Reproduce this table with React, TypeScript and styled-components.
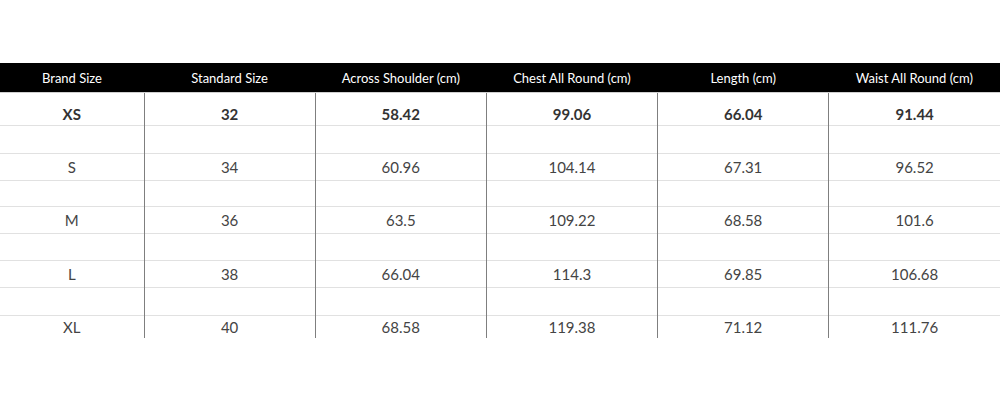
import React from 'react';
import styled, { createGlobalStyle } from 'styled-components';

const GlobalStyle = createGlobalStyle`
  html, body {
    margin: 0;
    padding: 0;
    background: #fff;
  }
  body {
    font-family: Lato, 'Open Sans', Arial, sans-serif;
  }
`;

const Page = styled.div`
  width: 1000px;
  height: 400px;
  padding-top: 63px;
  box-sizing: border-box;
  overflow: hidden;
`;

const Table = styled.table`
  width: 1000px;
  border-collapse: collapse;
  table-layout: fixed;
`;

const HeadCell = styled.th`
  height: 29px;
  padding: 0;
  background: #000;
  color: #fff;
  font-size: 13px;
  font-weight: 400;
  text-align: center;
  vertical-align: middle;
  border-bottom: 1px solid #cfcfcf;
`;

const Row = styled.tr<{ $h: number; $last?: boolean }>`
  height: ${p => p.$h}px;
  border-bottom: ${p => (p.$last ? 'none' : '1px solid #e1e1e1')};
`;

const Cell = styled.td<{ $bold?: boolean }>`
  padding: ${p => (p.$bold ? '10px 0 0' : '0')};
  text-align: center;
  vertical-align: middle;
  font-size: 15px;
  font-weight: ${p => (p.$bold ? 700 : 400)};
  color: ${p => (p.$bold ? '#333' : '#444')};
  & + & {
    border-left: 1px solid #7f7f7f;
  }
`;

const columns = [
  'Brand Size',
  'Standard Size',
  'Across Shoulder (cm)',
  'Chest All Round (cm)',
  'Length (cm)',
  'Waist All Round (cm)',
];

const sizes = [
  ['XS', '32', '58.42', '99.06', '66.04', '91.44'],
  ['S', '34', '60.96', '104.14', '67.31', '96.52'],
  ['M', '36', '63.5', '109.22', '68.58', '101.6'],
  ['L', '38', '66.04', '114.3', '69.85', '106.68'],
  ['XL', '40', '68.58', '119.38', '71.12', '111.76'],
];

// heights of the rows below the header, spacer rows included
const dataHeights = [33, 27, 27, 27, 27, 26, 27, 28, 22];
const spacerHeights = [28, 26, 27, 28];

const Spacer = ({ h }: { h: number }) => (
  <Row $h={h}>
    {columns.map(c => (
      <Cell key={c} />
    ))}
  </Row>
);

export default function App() {
  return (
    <Page>
      <GlobalStyle />
      <Table>
        <colgroup>
          <col style={{ width: 144 }} />
          <col />
          <col />
          <col />
          <col />
          <col />
        </colgroup>
        <thead>
          <tr>
            {columns.map(c => (
              <HeadCell key={c}>{c}</HeadCell>
            ))}
          </tr>
        </thead>
        <tbody>
          {sizes.map((row, i) => {
            const last = i === sizes.length - 1;
            return (
              <React.Fragment key={row[0]}>
                <Row $h={dataHeights[i * 2]} $last={last}>
                  {row.map((v, j) => (
                    <Cell key={j} $bold={i === 0}>
                      {v}
                    </Cell>
                  ))}
                </Row>
                {!last && <Spacer h={spacerHeights[i]} />}
              </React.Fragment>
            );
          })}
        </tbody>
      </Table>
    </Page>
  );
}
